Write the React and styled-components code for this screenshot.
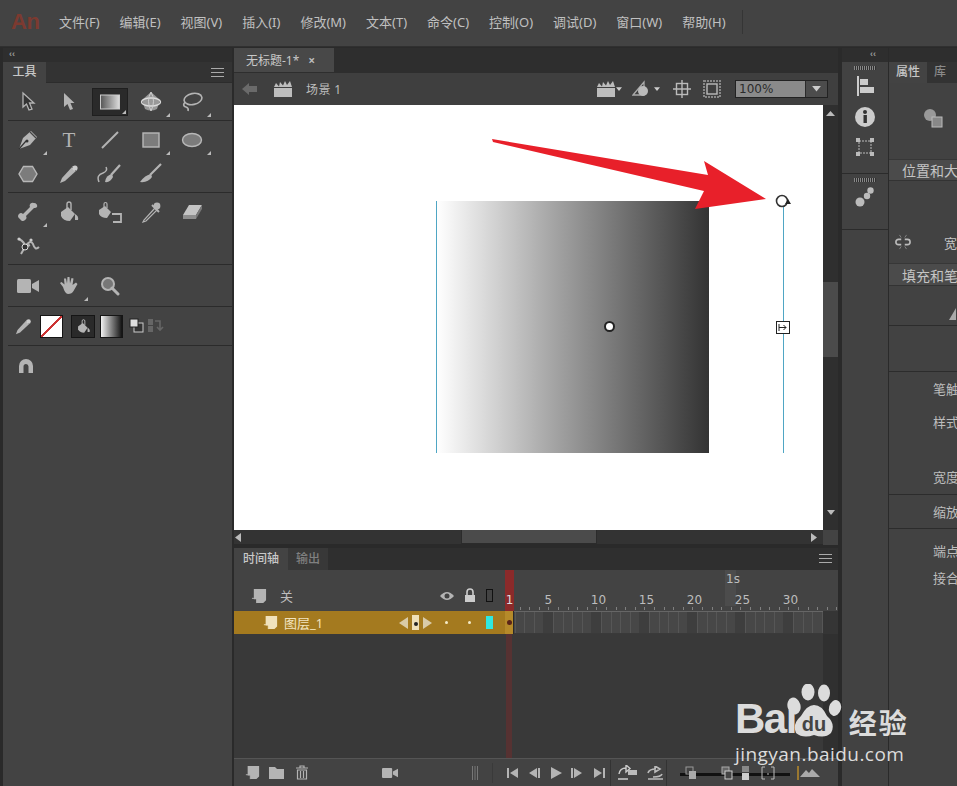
import React from 'react';
import styled, { createGlobalStyle } from 'styled-components';

const GlobalStyle = createGlobalStyle`
  html, body { margin: 0; padding: 0; background: #2b2b2b; }
  * { box-sizing: border-box; }
`;

const Page = styled.div`
  position: relative;
  width: 957px;
  height: 786px;
  overflow: hidden;
  display: flex;
  flex-direction: column;
  background: #2a2a2a;
  color: #c4c4c4;
  font-family: "Noto Sans", "Noto Sans CJK SC", sans-serif;
  font-size: 13px;
`;

/* menu */
const MenuBar = styled.div`
  height: 47px;
  flex: none;
  display: flex;
  align-items: center;
  background: #434343;
  border-bottom: 1px solid #303030;
  padding-bottom: 3px;
`;
const Logo = styled.div`
  width: 59px;
  padding-left: 11px;
  font: bold 22px "Liberation Sans", sans-serif;
  color: #7c3a30;
  letter-spacing: -0.5px;
`;
const MenuItems = styled.div`
  display: flex;
  gap: 20px;
`;
const MenuItem = styled.span`
  font-size: 13px;
  color: #c0c0c0;
  white-space: nowrap;
`;
const MenuEnd = styled.div`
  width: 1px;
  height: 24px;
  margin-left: 16px;
  background: #353535;
`;

const Workspace = styled.div`
  flex: 1;
  display: flex;
  min-height: 0;
`;

/* shared panel bits */
const Collapse = styled.div`
  height: 14px;
  background: #2e2e2e;
  color: #9a9a9a;
  font: bold 9px/13px "Liberation Sans", sans-serif;
  padding-left: ${(p) => p.$pad || 6}px;
`;
const Burger = styled.div`
  width: 13px;
  height: 9px;
  border-top: 1px solid #aaa;
  border-bottom: 1px solid #aaa;
  position: relative;
  &::after {
    content: '';
    position: absolute;
    left: 0;
    right: 0;
    top: 3px;
    height: 1px;
    background: #aaa;
  }
`;

/* tools panel */
const ToolsPanel = styled.div`
  width: 229px;
  margin: 1px 2px 0 3px;
  display: flex;
  flex-direction: column;
  background: #434343;
`;
const TabRow = styled.div`
  height: 21px;
  flex: none;
  display: flex;
  align-items: center;
  justify-content: space-between;
  background: #333;
  padding-right: 8px;
  border-bottom: 1px solid #2c2c2c;
`;
const PanelTab = styled.div`
  height: 21px;
  width: ${(p) => p.$w}px;
  background: ${(p) => p.$bg || '#434343'};
  color: ${(p) => p.$color || '#c8c8c8'};
  font-size: 12px;
  line-height: 20px;
  text-align: center;
  font-weight: 500;
`;
const ToolSection = styled.div`
  height: ${(p) => p.$h}px;
  margin-left: 5px;
  padding-left: 0;
  display: grid;
  grid-template-columns: repeat(5, 41px);
  grid-auto-rows: 34px;
  align-content: center;
  border-bottom: 1px solid #2b2b2b;
  margin-left: 5px;
`;
const Tool = styled.div`
  position: relative;
  height: 34px;
  display: flex;
  align-items: center;
  justify-content: center;
  margin-left: -1px;
  ${(p) => p.$corner && `
    &::after {
      content: '';
      position: absolute;
      right: 2px;
      bottom: 2px;
      border-left: 4px solid transparent;
      border-bottom: 4px solid #bbb;
    }
  `}
  ${(p) => p.$active && `
    &::before {
      content: '';
      position: absolute;
      inset: 3px 3px 3px 3px;
      background: #2a2a2a;
      border: 1px solid #1f1f1f;
    }
    & > svg { position: relative; }
    &::after { right: 5px; bottom: 5px; }
  `}
`;
const ColourRow = styled.div`
  height: 39px;
  margin-left: 5px;
  display: flex;
  align-items: center;
  border-bottom: 1px solid #2b2b2b;
`;
const Swatch = styled.div`
  width: ${(p) => p.$w || 23}px;
  height: 23px;
  margin-left: ${(p) => p.$ml || 0}px;
  border: 1px solid #151515;
  background: ${(p) => p.$bg};
  display: flex;
  align-items: center;
  justify-content: center;
`;
const MagnetRow = styled.div`
  padding: 11px 0 0 14px;
`;

/* centre column */
const Centre = styled.div`
  width: 604px;
  flex: none;
  display: flex;
  flex-direction: column;
  margin-right: 4px;
`;
const DocTabs = styled.div`
  height: 25px;
  flex: none;
  margin-top: 1px;
  background: #2e2e2e;
`;
const DocTab = styled.div`
  width: 100px;
  height: 24px;
  background: #484848;
  display: flex;
  align-items: center;
  padding-left: 12px;
  gap: 9px;
  font-size: 12px;
  color: #c8c8c8;
  & b { font-weight: 700; font-size: 12px; color: #bbb; }
`;
const EditBar = styled.div`
  height: 32px;
  flex: none;
  display: flex;
  align-items: center;
  background: #3f3f3f;
  padding-left: 8px;
`;
const Scene = styled.span`
  margin-left: 13px;
  color: #bdbdbd;
  font-size: 12px;
  letter-spacing: 0.4px;
`;
const EditRight = styled.div`
  margin-left: auto;
  display: flex;
  align-items: center;
  margin-right: 10px;
`;
const ZoomBox = styled.div`
  width: 93px;
  height: 18px;
  margin-left: 14px;
  display: flex;
  background: #8a8a8a;
  border: 1px solid #222;
  color: #2b2b2b;
  font: 12px/16px "DejaVu Sans", sans-serif;
  padding-left: 3px;
`;
const ZoomArrow = styled.div`
  margin-left: auto;
  width: 22px;
  background: #4c4c4c;
  border-left: 1px solid #2b2b2b;
  display: flex;
  align-items: center;
  justify-content: center;
`;
const StageRow = styled.div`
  height: 425px;
  flex: none;
  display: flex;
`;
const Stage = styled.div`
  position: relative;
  flex: 1;
  background: #fff;
  overflow: hidden;
`;
const GradientShape = styled.div`
  position: absolute;
  left: 203px;
  top: 96px;
  width: 272px;
  height: 252px;
  background: linear-gradient(90deg, #fff 0%, #aaa 40%, #333 100%);
`;
const GuideLine = styled.div`
  position: absolute;
  left: ${(p) => p.$x}px;
  top: 96px;
  width: 1px;
  height: 252px;
  background: #4fa6c4;
`;
const CentreDot = styled.div`
  position: absolute;
  left: 370px;
  top: 216px;
  width: 11px;
  height: 11px;
  border-radius: 50%;
  background: #fff;
  border: 2px solid #222;
`;
const WidthHandle = styled.div`
  position: absolute;
  left: 542px;
  top: 216px;
  width: 14px;
  height: 13px;
  background: #fff;
  border: 1px solid #222;
  display: flex;
  align-items: center;
  justify-content: center;
`;
const Overlay = styled.svg`
  position: absolute;
  left: 0;
  top: 0;
`;
const VScroll = styled.div`
  width: 15px;
  flex: none;
  display: flex;
  flex-direction: column;
  align-items: center;
  background: #2f2f2f;
  padding-top: 6px;
`;
const VThumb = styled.div`
  width: 15px;
  height: ${(p) => p.$h}px;
  margin-top: ${(p) => p.$top}px;
  background: #4b4b4b;
`;
const HScroll = styled.div`
  height: 15px;
  flex: none;
  display: flex;
  align-items: center;
  background: #333;
  border-bottom: 1px solid #2a2a2a;
`;
const HThumb = styled.div`
  width: 136px;
  height: 14px;
  margin-left: 219px;
  background: #4b4b4b;
  border: 1px solid #2b2b2b;
  border-top: 0;
`;
const HEnd = styled.div`
  margin-left: auto;
  width: 15px;
  height: 15px;
  background: #434343;
`;

/* timeline */
const Timeline = styled.div`
  position: relative;
  flex: 1;
  margin-top: 3px;
  display: flex;
  flex-direction: column;
  min-height: 0;
`;
const TimelineTabs = styled.div`
  height: 22px;
  flex: none;
  display: flex;
  align-items: flex-end;
  background: #2f2f2f;
  padding-right: 6px;
`;
const TLTab = styled.div`
  height: 22px;
  width: ${(p) => p.$w}px;
  background: ${(p) => p.$bg};
  color: ${(p) => p.$color};
  font-size: 12px;
  font-weight: 500;
  line-height: 21px;
  text-align: center;
`;
const TabsEnd = styled.div`
  margin: 0 0 7px auto;
`;
const RulerRow = styled.div`
  height: 41px;
  flex: none;
  display: flex;
  background: #434343;
`;
const LayerCols = styled.div`
  width: 271px;
  flex: none;
  display: grid;
  grid-template-columns: 201px 23px 23px 17px;
  align-items: center;
  padding-right: 7px;
`;
const RulerLeft = styled(LayerCols)`
  padding-top: 10px;
`;
const LayerName = styled.div`
  display: flex;
  align-items: center;
  padding-left: 17px;
  gap: 13px;
  font-size: 13px;
  color: #bdbdbd;
`;
const Centered = styled.div`
  display: flex;
  justify-content: center;
  align-items: center;
`;
const Ruler = styled.div`
  position: relative;
  flex: 1;
`;
const RulerBand = styled.div`
  position: absolute;
  left: 220px;
  top: 0;
  width: 11px;
  bottom: 5px;
  background: #4c4c4c;
`;
const Ticks = styled.div`
  position: absolute;
  left: 5px;
  right: 0;
  bottom: 1px;
  height: 3px;
  background: repeating-linear-gradient(90deg, #9a9a9a 0 1px, transparent 1px 9.6px);
  opacity: 0.7;
`;
const FrameLabel = styled.span`
  position: absolute;
  top: ${(p) => p.$top}px;
  font: 12px/14px "DejaVu Sans", sans-serif;
  color: #bdbdbd;
  transform: translateX(-50%);
`;
const LayerRow = styled.div`
  height: 23px;
  flex: none;
  display: flex;
  background: #a47a1f;
`;
const LayerCell = styled(LayerCols)``;
const LayerTitle = styled.div`
  display: flex;
  align-items: center;
  padding-left: 29px;
  gap: 6px;
  color: #f2e4c0;
  font-size: 13px;
`;
const LayerArrows = styled.div`
  margin-left: auto;
  margin-right: 3px;
  display: flex;
  align-items: center;
  gap: 4px;
`;
const Pencil = styled.div`
  width: 7px;
  height: 15px;
  background: #efe0b8;
  display: flex;
  align-items: center;
  justify-content: center;
  &::after {
    content: '';
    width: 4px;
    height: 4px;
    border-radius: 50%;
    background: #222;
    margin-top: 3px;
  }
`;
const Dot = styled.div`
  width: 3px;
  height: 3px;
  border-radius: 50%;
  background: #f5ebc8;
`;
const OutlineBox = styled.div`
  width: 7px;
  height: 13px;
  background: ${(p) => p.$bg || 'transparent'};
  border: 1px solid ${(p) => p.$line || '#111'};
`;
const Frames = styled.div`
  position: relative;
  flex: 1;
  border-top: 1px solid #666;
  border-bottom: 1px solid #3a3a3a;
  background-color: #474747;
  background-image:
    repeating-linear-gradient(90deg, transparent 0 38.4px, #3e3e3e 38.4px 48px),
    repeating-linear-gradient(90deg, #565656 0 1px, transparent 1px 9.6px);
  margin-right: 15px;
`;
const FrameEnd = styled.div`
  width: 15px;
  background: #353535;
`;
const TLBody = styled.div`
  flex: 1;
  display: flex;
  justify-content: flex-end;
  background: #393939;
  min-height: 0;
`;
const TLScroll = styled.div`
  width: 15px;
  background: #303030;
`;
const PlayHead = styled.div`
  position: absolute;
  left: 271px;
  top: 22px;
  width: 9px;
  height: 41px;
  background: #8b2a2a;
  color: #ddd;
  font: 12px/14px "DejaVu Sans", sans-serif;
  text-align: center;
  padding-top: 23px;
`;
const PlayTrail = styled.div`
  position: absolute;
  left: 272px;
  top: 86px;
  width: 6px;
  height: 124px;
  background: rgba(130, 40, 40, 0.4);
`;
const PlayKey = styled.div`
  position: absolute;
  left: 271px;
  top: 63px;
  width: 9px;
  height: 23px;
  background: #b58a2a;
  border-right: 1px solid #2a2a2a;
  display: flex;
  align-items: center;
  justify-content: center;
  &::after {
    content: '';
    width: 5px;
    height: 5px;
    border-radius: 50%;
    background: #5a2418;
  }
`;
const BottomBar = styled.div`
  position: relative;
  height: 28px;
  flex: none;
  display: flex;
  align-items: center;
  background: #434343;
  border-top: 1px solid #555;
  padding-left: 10px;
`;
const BarIcon = styled.div`
  width: ${(p) => p.$w}px;
  display: flex;
  justify-content: center;
  z-index: 1;
`;
const BarRule = styled.div`
  width: 1px;
  height: 26px;
  background: #333;
`;
const OnionTrack = styled.div`
  position: absolute;
  left: 446px;
  top: 14px;
  width: 110px;
  height: 3px;
  background: #111;
`;

/* dock */
const Dock = styled.div`
  width: 46px;
  flex: none;
  margin-top: 1px;
  display: flex;
  flex-direction: column;
  background: #424242;
`;
const DockGroup = styled.div`
  display: flex;
  flex-direction: column;
  align-items: center;
  padding-top: 4px;
  height: ${(p) => p.$h}px;
  border-bottom: ${(p) => (p.$line ? '1px solid #2b2b2b' : '0')};
`;
const Grip = styled.div`
  width: 22px;
  height: 4px;
  margin-bottom: ${(p) => p.$gap}px;
  background: repeating-linear-gradient(90deg, #888 0 1px, #2f2f2f 1px 2px);
`;
const DockIcons = styled.div`
  display: flex;
  flex-direction: column;
  align-items: center;
  gap: 11px;
`;

/* properties */
const Props = styled.div`
  flex: 1;
  margin: 1px 0 0 1px;
  display: flex;
  flex-direction: column;
  background: #424242;
  min-width: 0;
  overflow: hidden;
`;
const PropsTabs = styled.div`
  height: 21px;
  flex: none;
  display: flex;
  background: #333;
`;
const PropsBlock = styled.div`
  height: ${(p) => p.$h}px;
  flex: none;
  position: relative;
  display: flex;
  flex-direction: column;
  border-bottom: ${(p) => (p.$line ? '1px solid #2c2c2c' : '0')};
  padding-top: ${(p) => p.$pt || 0}px;
`;
const SectionHead = styled.div`
  height: ${(p) => p.$h}px;
  flex: none;
  display: flex;
  align-items: center;
  padding-left: 6px;
  gap: 7px;
  background: #4b4b4b;
  border-top: 1px solid #373737;
  border-bottom: 1px solid #333;
  font-size: 14px;
  color: #c4c4c4;
  white-space: nowrap;
`;
const PropLabel = styled.div`
  height: ${(p) => p.$h || 20}px;
  line-height: ${(p) => p.$h || 20}px;
  padding-left: ${(p) => p.$pl || 44}px;
  margin-bottom: ${(p) => p.$mb || 0}px;
  font-size: 13px;
  color: #bdbdbd;
  white-space: nowrap;
`;
const LinkRow = styled.div`
  display: flex;
  align-items: center;
  height: 20px;
  padding-left: 6px;
  margin-top: 51px;
  gap: 33px;
`;

/* watermark */
const Watermark = styled.div`
  position: absolute;
  left: 735px;
  top: 684px;
  width: 172px;
  height: 82px;
  color: #dcdcdc;
`;
const WmTop = styled.div`
  display: flex;
  align-items: flex-end;
  height: 57px;
`;
const WmBai = styled.span`
  font: bold 42px/44px "Liberation Sans", sans-serif;
  letter-spacing: -1.5px;
  margin-right: 53px;
`;
const WmPaw = styled.svg`
  position: absolute;
  left: 51px;
  top: 0;
`;
const WmCn = styled.span`
  font: bold 28px/36px "Noto Sans CJK SC", sans-serif;
  letter-spacing: 2px;
  margin-left: 0;
  white-space: nowrap;
  margin-bottom: 1px;
`;
const WmUrl = styled.div`
  font: 19px/22px "Open Sans", "Liberation Sans", sans-serif;
  letter-spacing: 0.45px;
  white-space: nowrap;
  margin-top: 2px;
`;

const G = '#b4b4b4';

function Ico({ w = 20, h = 20, vb, children }) {
  return (
    <svg width={w} height={h} viewBox={vb || `0 0 ${w} ${h}`}>
      {children}
    </svg>
  );
}

const MENU = ['文件(F)', '编辑(E)', '视图(V)', '插入(I)', '修改(M)', '文本(T)', '命令(C)', '控制(O)', '调试(D)', '窗口(W)', '帮助(H)'];
const FRAME_MARKS = [5, 10, 15, 20, 25, 30];

const SubSelect = () => (
  <Ico w={16} h={22}>
    <path d="M3 2 L3 16 L6.5 13 L9 19 L12 18 L9.5 12 L14 12 Z" fill="#333" stroke={G} strokeWidth="1.3" />
  </Ico>
);
const Select = () => (
  <Ico w={14} h={20}>
    <path d="M2 1 L2 15 L5.5 12 L8 18 L11 17 L8.5 11 L12.5 11 Z" fill={G} />
  </Ico>
);
const GradTool = () => (
  <Ico w={20} h={16}>
    <defs>
      <linearGradient id="gt" x1="0" x2="1">
        <stop offset="0" stopColor="#555" />
        <stop offset="1" stopColor="#ddd" />
      </linearGradient>
    </defs>
    <rect x="0.5" y="1" width="19" height="14" fill="url(#gt)" stroke="#ccc" />
  </Ico>
);
const Sphere = () => (
  <Ico w={22} h={22}>
    <path d="M11 1 L20 9 L17 18 Q11 21 5 18 L2 9 Z" fill="#999" />
    <ellipse cx="11" cy="11" rx="9.5" ry="4" fill="none" stroke="#ddd" strokeWidth="1.4" />
    <path d="M11 1 Q6 10 11 20 Q16 10 11 1" fill="none" stroke="#ccc" />
  </Ico>
);
const Lasso = () => (
  <Ico w={22} h={20}>
    <ellipse cx="12" cy="7" rx="9" ry="5.5" fill="none" stroke={G} strokeWidth="1.6" transform="rotate(-12 12 7)" />
    <path d="M4 10 Q1 14 5 15 Q8 16 7 19" fill="none" stroke={G} strokeWidth="1.6" />
  </Ico>
);
const Pen = () => (
  <Ico w={22} h={22}>
    <path d="M14 2 L20 8 L13 16 L2 20 L6 9 Z" fill={G} />
    <path d="M2 20 L9 12" stroke="#333" strokeWidth="1.2" />
    <circle cx="10" cy="12" r="1.5" fill="#333" />
    <path d="M13 3 L19 9" stroke="#444" strokeWidth="1.2" />
  </Ico>
);
const LineTool = () => (
  <Ico w={20} h={20}>
    <path d="M2 18 L18 2" stroke={G} strokeWidth="2" />
  </Ico>
);
const RectTool = () => (
  <Ico w={18} h={16}>
    <rect x="1" y="1" width="16" height="14" fill="#7c7c7c" stroke="#b8b8b8" strokeWidth="1.4" />
  </Ico>
);
const OvalTool = () => (
  <Ico w={22} h={16}>
    <ellipse cx="11" cy="8" rx="9.5" ry="6.5" fill="#7c7c7c" stroke="#b8b8b8" strokeWidth="1.4" />
  </Ico>
);
const PolyTool = () => (
  <Ico w={20} h={18}>
    <path d="M5.5 1.5 H14.5 L19 9 L14.5 16.5 H5.5 L1 9 Z" fill="#7c7c7c" stroke="#b8b8b8" strokeWidth="1.4" />
  </Ico>
);
const PencilTool = ({ s = 20 }) => (
  <Ico w={s} h={s} vb="0 0 20 20">
    <path d="M14 2 L18 6 L6 17 L1 19 L3 14 Z" fill={G} />
    <path d="M13 3 L17 7" stroke="#444" />
    <circle cx="16" cy="4" r="2.6" fill="#ccc" />
  </Ico>
);
const InkTool = () => (
  <Ico w={26} h={22}>
    <path d="M2 19 Q-1 12 6 10 Q11 8 9 4" fill="none" stroke={G} strokeWidth="1.5" />
    <path d="M23 2 L14 12" stroke={G} strokeWidth="2.2" />
    <path d="M15 11 Q9 12 8 19 Q13 20 16 14 Z" fill={G} />
  </Ico>
);
const Brush = () => (
  <Ico w={24} h={22}>
    <path d="M22 1 L11 12" stroke={G} strokeWidth="2.2" />
    <path d="M12 11 Q6 12 1 19 Q9 20 13 14 Z" fill={G} />
  </Ico>
);
const Bone = () => (
  <Ico w={22} h={22}>
    <path d="M17 2 a3 3 0 0 1 3 4 a3 3 0 0 1 -3 1 L9 15 a3 3 0 0 1 -1 4 a3 3 0 0 1 -5 -1 a3 3 0 0 1 -1 -5 a3 3 0 0 1 4 0 L13 6 a3 3 0 0 1 4 -4 Z" fill={G} />
  </Ico>
);
const Bucket = ({ w = 22, h = 22 }) => (
  <Ico w={w} h={h} vb="0 0 22 22">
    <path d="M3 11 L10 6 L17 13 L12 20 Q5 20 3 15 Z" fill={G} />
    <path d="M9 9 V3 a2 2 0 0 1 4 0 V9" fill="none" stroke={G} strokeWidth="1.4" />
    <path d="M17 13 Q21 15 20 19 L17 19 Z" fill={G} />
  </Ico>
);
const InkBottle = () => (
  <Ico w={26} h={22}>
    <path d="M2 9 L8 5 L14 11 L10 17 Q4 17 2 13 Z" fill={G} />
    <path d="M7 7 V3 a1.5 1.5 0 0 1 3 0 V7" fill="none" stroke={G} strokeWidth="1.2" />
    <path d="M15 13 H24 V21 H16" fill="none" stroke={G} strokeWidth="1.8" />
  </Ico>
);
const Dropper = () => (
  <Ico w={20} h={22}>
    <path d="M14 7 L3 19 L2 21 L5 20 L16 9 Z" fill="#444" stroke={G} strokeWidth="1.2" />
    <circle cx="16" cy="5" r="3.4" fill={G} />
    <path d="M11 4 L18 11" stroke={G} strokeWidth="2" />
  </Ico>
);
const Eraser = () => (
  <Ico w={22} h={18}>
    <path d="M8 2 L21 2 L15 12 L2 12 Z" fill="#c4c4c4" />
    <path d="M2 12 L15 12 L15 16 L2 16 Z" fill="#8e8e8e" />
    <path d="M15 12 L21 2 L21 6 L15 16 Z" fill="#777" />
  </Ico>
);
const Puppet = () => (
  <Ico w={24} h={22}>
    <path d="M3 4 Q9 7 9 12 L5 19 M9 12 Q14 4 17 9 Q19 16 23 12 M9 12 L14 10" fill="none" stroke={G} strokeWidth="2" />
    <circle cx="9" cy="12" r="3" fill="#333" stroke="#ddd" />
    <circle cx="3" cy="4" r="1.6" fill="#ccc" />
    <circle cx="15" cy="5" r="1.6" fill="#ccc" />
  </Ico>
);
const Camera = ({ w = 22, h = 16 }) => (
  <Ico w={w} h={h} vb="0 0 22 16">
    <rect x="0" y="1" width="14" height="14" rx="1.5" fill={G} />
    <path d="M15 6 L22 2 V14 L15 10 Z" fill={G} />
  </Ico>
);
const Hand = () => (
  <Ico w={22} h={22}>
    <path d="M5 12 L2 8 L3.5 7 L6.5 9.5 L6 3.5 H8 L9 8.5 L9.5 2 H11.5 L12 8.5 L13.5 3 L15.5 3.5 L14.5 10 L18 7.5 L19.5 9 L15.5 16 Q14 19 10 19 Q7 19 5 12 Z" fill={G} />
  </Ico>
);
const Magnifier = () => (
  <Ico w={20} h={20}>
    <circle cx="8" cy="8" r="6" fill="#777" stroke={G} strokeWidth="2" />
    <path d="M12 12 L18 18" stroke={G} strokeWidth="3" strokeLinecap="round" />
  </Ico>
);
const SwapColours = () => (
  <Ico w={36} h={16}>
    <rect x="5" y="5" width="9" height="9" fill="#333" stroke="#ccc" />
    <rect x="1" y="1" width="8" height="8" fill="#ddd" stroke="#222" />
    <rect x="19" y="1" width="5" height="6" fill="#666" />
    <rect x="19" y="8" width="5" height="6" fill="#666" />
    <path d="M26 3 H31 V11 M28 9 L31 12 L34 9" fill="none" stroke="#666" strokeWidth="1.6" />
  </Ico>
);
const Magnet = () => (
  <Ico w={18} h={18}>
    <path d="M2 16 V9 a7 7 0 0 1 14 0 V16 H11.5 V9.5 a2.5 2.5 0 0 0 -5 0 V16 Z" fill={G} />
  </Ico>
);
const Clapper = ({ w = 20, h = 18, c = '#bdbdbd' }) => (
  <Ico w={w} h={h} vb="0 0 20 18">
    <rect x="1" y="8" width="18" height="9" fill={c} />
    <path d="M1 7 L3 3 L6 6.5 L7 2 L10 5.5 L12 1 L14 5 L17 1 L19 7 Z" fill={c} />
  </Ico>
);
const DownTri = ({ c = '#ccc', w = 8 }) => (
  <Ico w={w} h={w / 2 + 1} vb="0 0 8 5">
    <path d="M0 0 H8 L4 5 Z" fill={c} />
  </Ico>
);
const LayerSheet = ({ c = G, s = 17 }) => (
  <Ico w={s} h={s} vb="0 0 17 17">
    <path d="M3 1 H16 V13 L13 16 H6 V12 H3 Z" fill={c} />
    <path d="M1 11 H6 V16" fill="none" stroke={c} strokeWidth="1" />
  </Ico>
);

function ToolsColumn() {
  return (
    <ToolsPanel>
      <Collapse>‹‹</Collapse>
      <TabRow>
        <PanelTab $w={43}>工具</PanelTab>
        <Burger />
      </TabRow>
      <ToolSection $h={38}>
        <Tool><SubSelect /></Tool>
        <Tool><Select /></Tool>
        <Tool $active $corner><GradTool /></Tool>
        <Tool $corner><Sphere /></Tool>
        <Tool $corner><Lasso /></Tool>
      </ToolSection>
      <ToolSection $h={72}>
        <Tool $corner><Pen /></Tool>
        <Tool>
          <Ico w={20} h={20}>
            <text x="10" y="17" textAnchor="middle" fontFamily="Liberation Serif" fontSize="21" fill={G}>T</text>
          </Ico>
        </Tool>
        <Tool><LineTool /></Tool>
        <Tool $corner><RectTool /></Tool>
        <Tool $corner><OvalTool /></Tool>
        <Tool><PolyTool /></Tool>
        <Tool><PencilTool /></Tool>
        <Tool><InkTool /></Tool>
        <Tool><Brush /></Tool>
      </ToolSection>
      <ToolSection $h={72}>
        <Tool $corner><Bone /></Tool>
        <Tool><Bucket /></Tool>
        <Tool><InkBottle /></Tool>
        <Tool><Dropper /></Tool>
        <Tool><Eraser /></Tool>
        <Tool><Puppet /></Tool>
      </ToolSection>
      <ToolSection $h={42}>
        <Tool><Camera /></Tool>
        <Tool $corner><Hand /></Tool>
        <Tool><Magnifier /></Tool>
      </ToolSection>
      <ColourRow>
        <Tool style={{ width: 33 }}><PencilTool s={17} /></Tool>
        <Swatch $bg="linear-gradient(135deg, #fff 47%, #c33 47%, #c33 53%, #fff 53%)" />
        <Swatch $w={24} $ml={8} $bg="#2a2a2a"><Bucket w={15} h={15} /></Swatch>
        <Swatch $ml={5} $bg="linear-gradient(90deg, #f2f2f2, #111)" />
        <Ico w={6} h={6} />
        <SwapColours />
      </ColourRow>
      <MagnetRow><Magnet /></MagnetRow>
    </ToolsPanel>
  );
}

function StageArea() {
  return (
    <StageRow>
      <Stage>
        <GradientShape />
        <GuideLine $x={202} />
        <GuideLine $x={549} />
        <CentreDot />
        <WidthHandle>
          <Ico w={10} h={9}>
            <path d="M1 4.5 H8 M5.5 2 L8 4.5 L5.5 7 M1 1 V8" stroke="#222" fill="none" />
          </Ico>
        </WidthHandle>
        <Overlay width="589" height="425">
          <path d="M258 34 L474 70 L470 56 L532 94 L461 104 L470 86 L259 37 Z" fill="#e8202a" />
          <circle cx="548" cy="96" r="5.5" fill="#fff" stroke="#333" strokeWidth="1.6" />
          <path d="M551 99 L557 99 L554 94 Z" fill="#222" />
        </Overlay>
      </Stage>
      <VScroll>
        <DownArrowUp />
        <VThumb $h={75} $top={165} />
        <Ico w={8} h={160} vb="0 0 8 160">
          <path d="M0 153 H8 L4 158 Z" fill="#bbb" />
        </Ico>
      </VScroll>
    </StageRow>
  );
}

function DownArrowUp() {
  return (
    <Ico w={9} h={6}>
      <path d="M0 5 H9 L4.5 0 Z" fill="#bbb" />
    </Ico>
  );
}

function TimelinePanel() {
  return (
    <Timeline>
      <TimelineTabs>
        <TLTab $w={54} $bg="#434343" $color="#c8c8c8">时间轴</TLTab>
        <TLTab $w={40} $bg="#383838" $color="#808080">输出</TLTab>
        <TabsEnd><Burger /></TabsEnd>
      </TimelineTabs>
      <RulerRow>
        <RulerLeft>
          <LayerName>
            <LayerSheet s={16} />
            关
          </LayerName>
          <Centered>
            <Ico w={16} h={12}>
              <path d="M1 6 Q8 -2 15 6 Q8 14 1 6 Z" fill={G} />
              <circle cx="8" cy="6" r="2.5" fill="#434343" />
            </Ico>
          </Centered>
          <Centered>
            <Ico w={12} h={15}>
              <path d="M3 7 V4 a3 3 0 0 1 6 0 V7" fill="none" stroke="#ccc" strokeWidth="1.6" />
              <rect x="1" y="7" width="10" height="7" fill="#ccc" />
            </Ico>
          </Centered>
          <Centered><OutlineBox /></Centered>
        </RulerLeft>
        <Ruler>
          <RulerBand />
          <Ticks />
          <FrameLabel $top={2} style={{ left: 228 }}>1s</FrameLabel>
          {FRAME_MARKS.map((n) => (
            <FrameLabel key={n} $top={23} style={{ left: 5 + (n - 1) * 9.6 + (n > 5 ? 2 : 0) }}>{n}</FrameLabel>
          ))}
        </Ruler>
      </RulerRow>
      <LayerRow>
        <LayerCell>
          <LayerTitle>
            <LayerSheet c="#f0e2bc" s={15} />
            图层_1
            <LayerArrows>
              <Ico w={9} h={12}><path d="M9 0 V12 L0 6 Z" fill="#d9cba8" /></Ico>
              <Pencil />
              <Ico w={9} h={12}><path d="M0 0 V12 L9 6 Z" fill="#d9cba8" /></Ico>
            </LayerArrows>
          </LayerTitle>
          <Centered><Dot /></Centered>
          <Centered><Dot /></Centered>
          <Centered><OutlineBox $bg="#2fe8e0" $line="#2fe8e0" /></Centered>
        </LayerCell>
        <Frames />
        <FrameEnd style={{ marginLeft: -15 }} />
      </LayerRow>
      <TLBody><TLScroll /></TLBody>
      <PlayHead>1</PlayHead>
      <PlayKey />
      <PlayTrail />
      <BottomBar>
        <BarIcon $w={16}><LayerSheet s={15} /></BarIcon>
        <BarIcon $w={32}>
          <Ico w={15} h={13}><path d="M0 1 H6 L8 3 H15 V13 H0 Z" fill={G} /></Ico>
        </BarIcon>
        <BarIcon $w={20}>
          <Ico w={14} h={15}>
            <path d="M1 3 H13 M5 3 V1 H9 V3 M2.5 5 H11.5 V14 H2.5 Z M5.5 6 V13 M8.5 6 V13" stroke={G} fill="none" strokeWidth="1.2" />
          </Ico>
        </BarIcon>
        <BarIcon $w={155}><Camera w={16} h={12} /></BarIcon>
        <BarIcon $w={0}><Ico w={0} h={0} /></BarIcon>
        <BarIcon $w={16}>
          <Ico w={6} h={14}><path d="M0.5 0 V14 M3 0 V14 M5.5 0 V14" stroke="#777" /></Ico>
        </BarIcon>
        <BarIcon $w={19}><BarRule style={{ height: 20, background: '#3a3a3a' }} /></BarIcon>
        <TransportIcons />
      </BottomBar>
    </Timeline>
  );
}

function TransportIcons() {
  return (
    <>
      <BarIcon $w={20}><Ico w={11} h={10}><path d="M0 0 H2 V10 H0 Z M11 0 V10 L3 5 Z" fill={G} /></Ico></BarIcon>
      <BarIcon $w={24}><Ico w={12} h={10}><path d="M9 0 V10 L1 5 Z M10 0 H12 V10 H10 Z" fill={G} /></Ico></BarIcon>
      <BarIcon $w={20}><Ico w={11} h={12}><path d="M0 0 L11 6 L0 12 Z" fill={G} /></Ico></BarIcon>
      <BarIcon $w={22}><Ico w={12} h={10}><path d="M0 0 H2 V10 H0 Z M3 0 L11 5 L3 10 Z" fill={G} /></Ico></BarIcon>
      <BarIcon $w={22}><Ico w={11} h={10}><path d="M0 0 L8 5 L0 10 Z M9 0 H11 V10 H9 Z" fill={G} /></Ico></BarIcon>
      <BarRule />
      <BarIcon $w={33}>
        <Ico w={22} h={15}>
          <path d="M2 9 Q3 3 9 3 M9 0 V7 L13 3.5 Z M1 14 H11" stroke="#ccc" fill="none" strokeWidth="1.4" />
          <rect x="11" y="5" width="9" height="5" fill="#bbb" />
        </Ico>
      </BarIcon>
      <BarIcon $w={22}>
        <Ico w={18} h={14}>
          <path d="M2 7 Q3 3 10 3 M9 0 L14 3 L9 6 Z M16 8 Q15 11 7 11 M2 13 H17" stroke="#bbb" fill="none" strokeWidth="1.6" />
        </Ico>
      </BarIcon>
      <BarRule />
      <OnionTrack />
      <BarIcon $w={48}>
        <Ico w={12} h={14}>
          <rect x="1" y="1" width="7" height="7" fill="none" stroke="#999" />
          <rect x="4" y="5" width="7" height="8" fill="#aaa" />
        </Ico>
      </BarIcon>
      <BarIcon $w={4}><Ico w={0} h={0} /></BarIcon>
      <BarIcon $w={16}>
        <Ico w={12} h={14}>
          <rect x="1" y="1" width="7" height="7" fill="#666" stroke="#aaa" />
          <rect x="4" y="5" width="7" height="8" fill="#434343" stroke="#ccc" />
        </Ico>
      </BarIcon>
      <BarIcon $w={22}>
        <Ico w={10} h={14}>
          <rect x="1" y="0" width="7" height="6" fill="#888" />
          <rect x="1" y="7" width="7" height="7" fill="#ccc" />
        </Ico>
      </BarIcon>
      <BarIcon $w={22}>
        <Ico w={14} h={14}>
          <path d="M4 1 H1 V13 H4 M10 1 H13 V13 H10 M6 8 H8" stroke="#bbb" fill="none" />
        </Ico>
      </BarIcon>
      <BarIcon $w={18}><Ico w={0} h={0} /></BarIcon>
      <BarIcon $w={24}>
        <Ico w={24} h={14}>
          <path d="M1 0 V14" stroke="#b88a2a" strokeWidth="1.5" />
          <path d="M3 11 L9 4 L12 7 L15 3 L23 11 Z" fill="#aaa" />
        </Ico>
      </BarIcon>
    </>
  );
}

function DockColumn() {
  return (
    <Dock>
      <Collapse $pad={28}>‹‹</Collapse>
      <DockGroup $h={112} $line>
        <Grip $gap={6} />
        <DockIcons>
          <Ico w={17} h={20}>
            <path d="M1 0 V20" stroke="#ccc" strokeWidth="2" />
            <rect x="3" y="3" width="8" height="6" fill="#ccc" />
            <rect x="3" y="11" width="14" height="6" fill="#ccc" />
          </Ico>
          <Ico w={20} h={20}>
            <circle cx="10" cy="10" r="10" fill="#ccc" />
            <rect x="8.5" y="8" width="3.4" height="8" fill="#333" />
            <circle cx="10" cy="5" r="2" fill="#333" />
          </Ico>
          <Ico w={18} h={18}>
            <rect x="3" y="3" width="12" height="12" fill="none" stroke="#bbb" strokeDasharray="2 1" />
            <path d="M0 0 H4 V4 H0 Z M14 0 H18 V4 H14 Z M0 14 H4 V18 H0 Z M14 14 H18 V18 H14 Z" fill="#bbb" />
          </Ico>
        </DockIcons>
      </DockGroup>
      <DockGroup $h={56} $line>
        <Grip $gap={5} />
        <Ico w={20} h={20}>
          <circle cx="15.5" cy="3.5" r="3.2" fill="#bbb" />
          <circle cx="12" cy="9" r="3.2" fill="#bbb" />
          <circle cx="5" cy="15" r="4.5" fill="#bbb" />
        </Ico>
      </DockGroup>
    </Dock>
  );
}

function PropsColumn() {
  return (
    <Props>
      <Collapse />
      <PropsTabs>
        <PanelTab $w={38}>属性</PanelTab>
        <PanelTab $w={26} $bg="#333" $color="#8a8a8a">库</PanelTab>
      </PropsTabs>
      <PropsBlock $h={76} $pt={26}>
        <Ico w={90} h={20}>
          <circle cx="41" cy="6" r="6" fill="#999" />
          <rect x="43" y="8" width="10" height="10" fill="#888" stroke="#bbb" />
        </Ico>
      </PropsBlock>
      <SectionHead $h={22}><DownTri w={11} />位置和大小</SectionHead>
      <PropsBlock $h={82}>
        <LinkRow>
          <Ico w={18} h={18}>
            <path d="M7 6 H4 a3 3 0 0 0 0 6 H7 M11 6 H14 a3 3 0 0 1 0 6 H11" fill="none" stroke="#bbb" strokeWidth="1.8" />
            <path d="M5 1 L7 4 M13 1 L11 4 M5 17 L7 14 M13 17 L11 14" stroke="#888" />
          </Ico>
          <span>宽</span>
        </LinkRow>
      </PropsBlock>
      <SectionHead $h={23}><DownTri w={11} />填充和笔触</SectionHead>
      <PropsBlock $h={40} $line $pt={22}>
        <Ico w={67} h={12}><path d="M60 12 L67 0 V12 Z" fill="#aaa" /></Ico>
      </PropsBlock>
      <PropsBlock $h={46} $line />
      <PropsBlock $h={123} $line $pt={7}>
        <PropLabel $mb={13}>笔触</PropLabel>
        <PropLabel $mb={35}>样式</PropLabel>
        <PropLabel>宽度</PropLabel>
      </PropsBlock>
      <PropsBlock $h={34} $line $pt={7}>
        <PropLabel>缩放</PropLabel>
      </PropsBlock>
      <PropsBlock $h={100} $pt={12}>
        <PropLabel $mb={7}>端点</PropLabel>
        <PropLabel>接合</PropLabel>
      </PropsBlock>
    </Props>
  );
}

export default function App() {
  return (
    <Page>
      <GlobalStyle />
      <MenuBar>
        <Logo>An</Logo>
        <MenuItems>
          {MENU.map((m) => (
            <MenuItem key={m}>{m}</MenuItem>
          ))}
        </MenuItems>
        <MenuEnd />
      </MenuBar>
      <Workspace>
        <ToolsColumn />
        <Centre>
          <DocTabs>
            <DocTab>无标题-1* <b>×</b></DocTab>
          </DocTabs>
          <EditBar>
            <Ico w={15} h={12}><path d="M0 6 L7 0 V3 H15 V9 H7 V12 Z" fill="#6a6a6a" /></Ico>
            <span style={{ width: 16 }} />
            <Clapper />
            <Scene>场景 1</Scene>
            <EditRight>
              <Clapper />
              <DownTri w={6} />
              <span style={{ width: 10 }} />
              <Ico w={22} h={18}>
                <path d="M1 15 L12 2 V15 Z" fill="none" stroke="#aaa" strokeWidth="1.3" />
                <circle cx="11" cy="11" r="5" fill="#bbb" />
              </Ico>
              <DownTri w={6} />
              <span style={{ width: 13 }} />
              <Ico w={18} h={18}>
                <rect x="3.5" y="3.5" width="11" height="11" fill="none" stroke="#bbb" strokeWidth="1.4" />
                <path d="M9 0 V18 M0 9 H18" stroke="#bbb" strokeWidth="1.4" />
              </Ico>
              <span style={{ width: 12 }} />
              <Ico w={18} h={18}>
                <rect x="1" y="1" width="16" height="16" fill="none" stroke="#888" strokeDasharray="2 1" strokeWidth="2" />
                <rect x="4" y="4" width="10" height="10" fill="none" stroke="#bbb" strokeWidth="1.4" />
              </Ico>
              <ZoomBox>
                100%
                <ZoomArrow><DownTri w={9} /></ZoomArrow>
              </ZoomBox>
            </EditRight>
          </EditBar>
          <StageArea />
          <HScroll>
            <Ico w={8} h={9}><path d="M7 0 V9 L1 4.5 Z" fill="#bbb" /></Ico>
            <HThumb />
            <Ico w={8} h={9} />
            <span style={{ marginLeft: 'auto' }} />
            <Ico w={8} h={9}><path d="M1 0 V9 L7 4.5 Z" fill="#bbb" /></Ico>
            <span style={{ width: 5 }} />
            <HEnd style={{ marginLeft: 0 }} />
          </HScroll>
          <TimelinePanel />
        </Centre>
        <DockColumn />
        <PropsColumn />
      </Workspace>
      <Watermark>
        <WmTop>
          <WmBai>Bai</WmBai>
          <WmPaw width="64" height="54" viewBox="0 0 64 54">
            <ellipse cx="8" cy="22" rx="6.5" ry="8.5" fill="#dcdcdc" transform="rotate(-15 8 22)" />
            <ellipse cx="22" cy="8" rx="6.5" ry="8.5" fill="#dcdcdc" />
            <ellipse cx="38" cy="9" rx="6" ry="8.5" fill="#dcdcdc" />
            <ellipse cx="49" cy="24" rx="6" ry="8" fill="#dcdcdc" transform="rotate(15 49 24)" />
            <path d="M28 21 Q36 21 41 32 Q50 40 45 49 Q39 55 28 51 Q17 55 10 49 Q6 40 15 32 Q21 21 28 21 Z" fill="#dcdcdc" />
            <text x="28" y="47" textAnchor="middle" fontFamily="Liberation Sans" fontWeight="bold" fontSize="20" fill="#444">du</text>
          </WmPaw>
          <WmCn>经验</WmCn>
        </WmTop>
        <WmUrl>jingyan.baidu.com</WmUrl>
      </Watermark>
    </Page>
  );
}
